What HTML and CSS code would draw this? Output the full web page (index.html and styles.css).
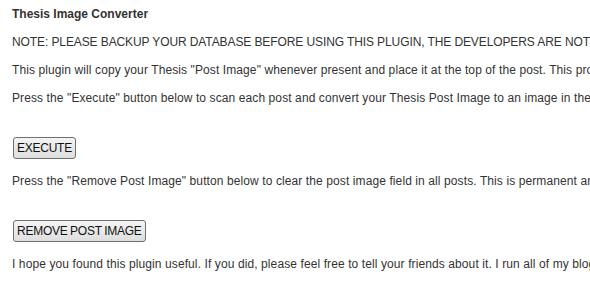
FILE: index.html
```html
<!DOCTYPE html>
<html lang="en">
<head>
    <meta charset="UTF-8">
    <meta name="viewport" content="width=device-width, initial-scale=1.0">
    <title>Thesis Image Converter</title>
    <link rel="stylesheet" href="styles.css">
</head>
<body>
    <div class="wrap">
        <h3 class="title">Thesis Image Converter</h3>
        <p class="note">NOTE: PLEASE BACKUP YOUR DATABASE BEFORE USING THIS PLUGIN, THE DEVELOPERS ARE NOT RESPONSIBLE FOR ANY LOSS OF DATA.</p>
        <p>This plugin will copy your Thesis "Post Image" whenever present and place it at the top of the post. This process cannot be undone.</p>
        <p>Press the "Execute" button below to scan each post and convert your Thesis Post Image to an image in the post content.</p>
        <form class="action">
            <input type="button" class="btn" value="EXECUTE">
        </form>
        <p>Press the "Remove Post Image" button below to clear the post image field in all posts. This is permanent and cannot be undone.</p>
        <form class="action">
            <input type="button" class="btn" value="REMOVE POST IMAGE">
        </form>
        <p>I hope you found this plugin useful. If you did, please feel free to tell your friends about it. I run all of my blogs on Thesis.</p>
    </div>
</body>
</html>
```

FILE: styles.css
```css
html, body { margin: 0; overflow: hidden; background-color: #fff; }
body { font-family: "Liberation Sans", Arial, sans-serif; font-size: 12px; line-height: 16px; color: #333; }
.wrap { padding: 6px 0 0 12px; white-space: nowrap; }
.title { font-size: 12px; font-weight: bold; margin: 0 0 12px; }
p { margin: 12px 0; letter-spacing: 0.1px; }
p.note { letter-spacing: -0.1px; }
.action { margin: 31px 0 14px; }
.btn { font-family: "Liberation Sans", Arial, sans-serif; font-size: 12px; color: #111; letter-spacing: -0.25px; word-spacing: -0.5px; height: 22px; padding: 2px 3px; margin: 0 0 0 1px; border: 1px solid #707070; border-radius: 3px; background: linear-gradient(#f4f4f4, #dedede); }
```
